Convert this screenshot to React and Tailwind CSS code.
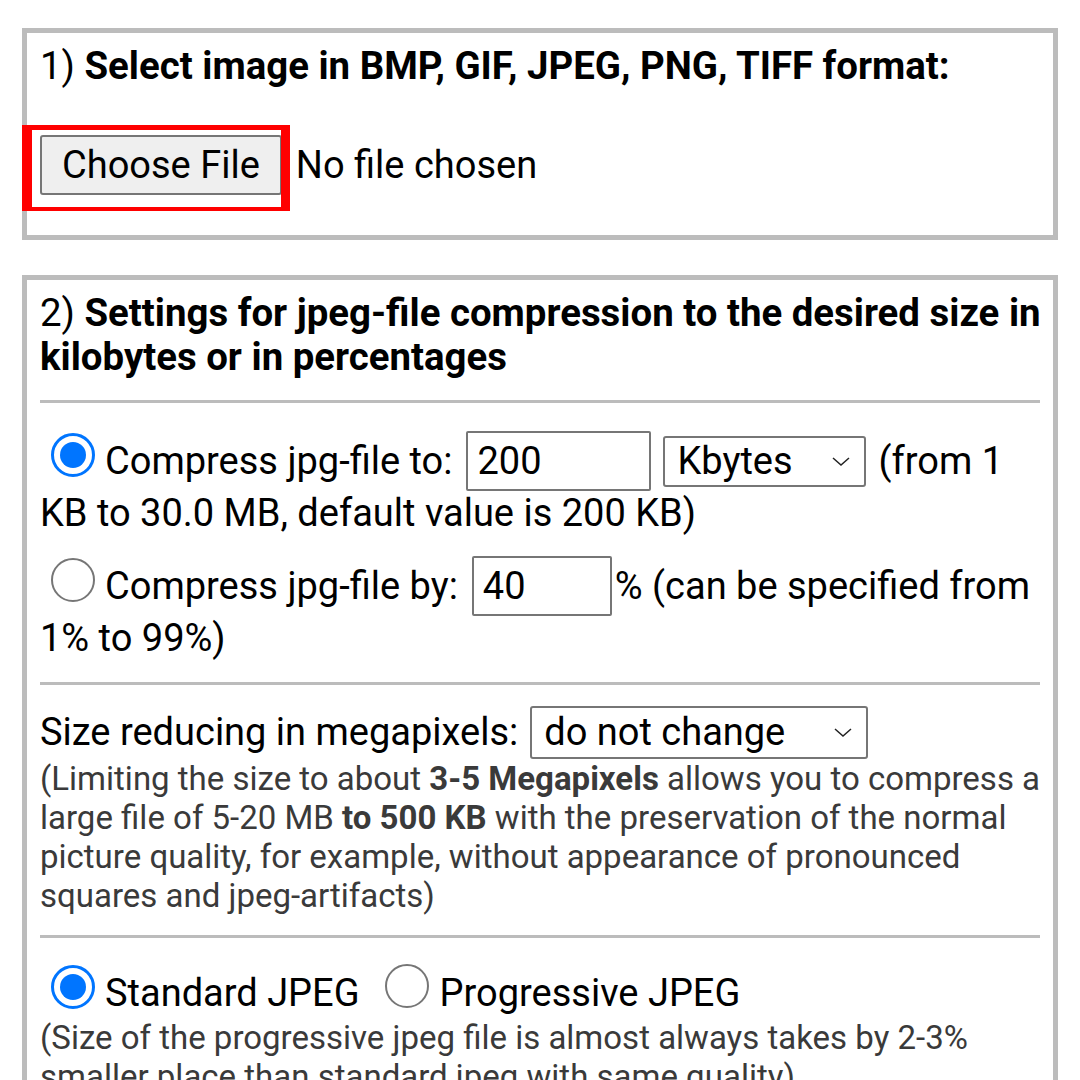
import React from 'react'

const FONT = { fontFamily: 'Roboto, "Liberation Sans", Arial, sans-serif' }

function Radio({ checked }) {
  return checked ? (
    <span className="block w-[44px] h-[44px] rounded-full border-[3px] border-[#0075ff] bg-white">
      <span className="flex w-full h-full items-center justify-center">
        <span className="block w-[26px] h-[26px] rounded-full bg-[#0075ff]" />
      </span>
    </span>
  ) : (
    <span className="block w-[44px] h-[44px] rounded-full border-[2.5px] border-[#767676] bg-white" />
  )
}

function Chevron() {
  return (
    <svg width="22" height="14" viewBox="0 0 22 14" className="shrink-0">
      <polyline points="3,4 11,11 19,4" fill="none" stroke="#222" strokeWidth="1.5" />
    </svg>
  )
}

function Select({ value, className }) {
  return (
    <div className={`flex items-center justify-between border-2 border-[#767676] rounded-[3px] bg-white pl-[12px] pr-[12px] ${className}`}>
      <span>{value}</span>
      <Chevron />
    </div>
  )
}

function Hr({ className }) {
  return <div className={`h-[3px] bg-[#bcbcbc] ${className}`} />
}

export default function App() {
  return (
    <div className="w-[1080px] h-[1080px] overflow-hidden bg-white text-black px-[22px] pt-[28px]" style={FONT}>
      {/* Step 1 */}
      <section className="border-[5px] border-[#bcbcbc] px-[13px] pt-[11px] pb-[40px]">
        <h2 className="text-[38.4px] leading-[44px]">
          1) <b>Select image in BMP, GIF, JPEG, PNG, TIFF format:</b>
        </h2>
        <div className="mt-[47px] flex items-center text-[38px] h-[60px]">
          <div className="relative">
            <button className="h-[60px] px-[20px] bg-[#efefef] border-2 border-[#767676] rounded-[3px] text-[38px] leading-none">
              Choose File
            </button>
            <div className="absolute left-[-18px] top-[-10px] w-[268px] h-[86px] border-[#ff0000] border-l-[10px] border-r-[9px] border-t-[5px] border-b-[4px]" />
          </div>
          <span className="ml-[14px]">No file chosen</span>
        </div>
      </section>

      {/* Step 2 */}
      <section className="mt-[35px] border-[5px] border-[#bcbcbc] px-[13px] pt-[11px] pb-[40px]">
        <h2 className="text-[38.4px] leading-[44px] mr-[-10px]">
          2) <b>Settings for jpeg-file compression to the desired size in kilobytes or in percentages</b>
        </h2>
        <Hr className="mt-[21px]" />

        <div className="text-[38px]">
          <div className="mt-[28px] flex items-center h-[60px]">
            <span className="ml-[11px] mr-[10px] mb-[12px]"><Radio checked /></span>
            <span>Compress jpg-file to:</span>
            <div className="ml-[14px] w-[185px] h-[60px] border-2 border-[#767676] rounded-[2px] pl-[9px] flex items-center">200</div>
            <Select value="Kbytes" className="ml-[12px] w-[203px] h-[51px]" />
            <span className="ml-[12px]">(from 1</span>
          </div>
          <div className="leading-[44px]">KB to 30.0 MB, default value is 200 KB)</div>

          <div className="mt-[21px] flex items-center h-[60px]">
            <span className="ml-[11px] mr-[10px] mb-[12px]"><Radio /></span>
            <span>Compress jpg-file by:</span>
            <div className="ml-[14px] w-[140px] h-[60px] border-2 border-[#767676] rounded-[2px] pl-[9px] flex items-center">40</div>
            <span className="ml-[3px]">% (can be specified from</span>
          </div>
          <div className="leading-[44px]">1% to 99%)</div>
        </div>

        <Hr className="mt-[22px]" />

        <div className="mt-[20px] flex items-center h-[54px] text-[38px]">
          <span>Size reducing in megapixels:</span>
          <Select value="do not change" className="ml-[12px] w-[338px] h-[53px]" />
        </div>
        <p className="text-[33px] leading-[39px] text-[#3a3a3a] whitespace-nowrap">
          (Limiting the size to about <b>3-5 Megapixels</b> allows you to compress a<br />
          large file of 5-20 MB <b>to 500 KB</b> with the preservation of the normal<br />
          picture quality, for example, without appearance of pronounced<br />
          squares and jpeg-artifacts)
        </p>

        <Hr className="mt-[20px]" />

        <div className="mt-[30px] flex items-center h-[50px] text-[38px]">
          <span className="ml-[11px] mr-[10px] mb-[12px]"><Radio checked /></span>
          <span>Standard JPEG</span>
          <span className="ml-[25px] mr-[11px] mb-[14px]"><Radio /></span>
          <span>Progressive JPEG</span>
        </div>
        <p className="text-[33px] leading-[39px] text-[#3a3a3a] whitespace-nowrap">
          (Size of the progressive jpeg file is almost always takes by 2-3%<br />
          smaller place than standard jpeg with same quality)
        </p>
      </section>
    </div>
  )
}
